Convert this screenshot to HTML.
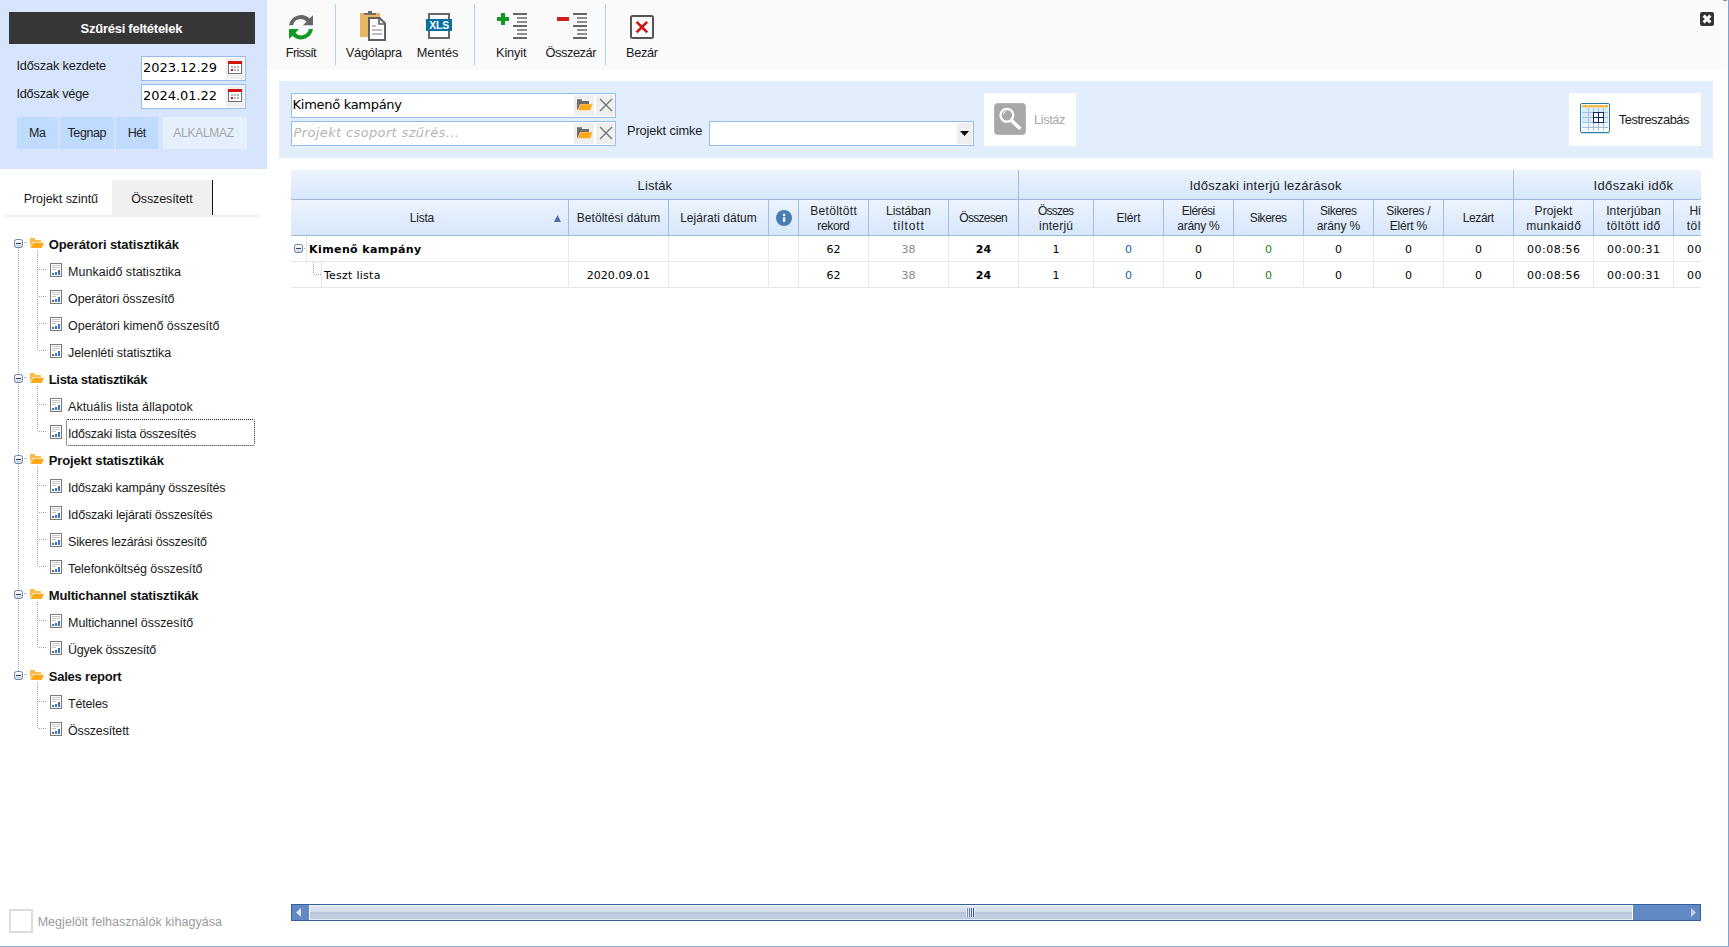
<!DOCTYPE html>
<html lang="hu">
<head>
<meta charset="utf-8">
<title>Időszaki lista összesítés</title>
<style>
*{box-sizing:border-box;margin:0;padding:0}
html,body{width:1729px;height:947px;overflow:hidden;background:#fff}
body{position:relative;font-family:"Liberation Sans",sans-serif;font-size:12.5px;color:#1a1a1a}
.t{position:absolute;white-space:nowrap}
.r{position:absolute}
svg{position:absolute;overflow:visible}
.hc{position:absolute;top:200px;height:35px;border-left:1px solid #a3bde0}
.dot-v{position:absolute;width:1px;background-image:linear-gradient(to bottom,#93a5c8 50%,transparent 50%);background-size:1px 2px}
.dot-h{position:absolute;height:1px;background-image:linear-gradient(to right,#93a5c8 50%,transparent 50%);background-size:2px 1px}
</style>
</head>
<body>
<div class="r" style="left:0px;top:0px;width:267px;height:169px;background:#d6e5fb;"></div>
<div class="r" style="left:9px;top:12px;width:246px;height:32px;background:#363636;"></div>
<div class="t" style="top:22px;font-size:13px;line-height:1;font-family:'Liberation Sans',sans-serif;color:#fff;font-weight:bold;letter-spacing:-0.256px;left:-68.63px;width:400px;text-align:center;">Szűrési feltételek</div>
<div class="t" style="top:60px;font-size:12.8px;line-height:1;font-family:'Liberation Sans',sans-serif;color:#1a1a1a;letter-spacing:-0.195px;left:16.42px;">Időszak kezdete</div>
<div class="t" style="top:88px;font-size:12.8px;line-height:1;font-family:'Liberation Sans',sans-serif;color:#1a1a1a;letter-spacing:-0.234px;left:16.42px;">Időszak vége</div>
<div class="r" style="left:141px;top:56px;width:105px;height:25px;background:#fff;border:1px solid #96bdec"></div>
<div class="r" style="left:226px;top:58px;width:18px;height:21px;background:#efefef;"></div>
<div class="t" style="top:61px;font-size:13px;line-height:1;font-family:'DejaVu Sans','Liberation Sans',sans-serif;color:#000;letter-spacing:-0.052px;left:143.01px;">2023.12.29</div>
<svg style="left:228px;top:61px" width="14" height="13" viewBox="0 0 14 13"><rect x=".5" y="2.5" width="13" height="10" fill="#fff" stroke="#6f6f6f"/><rect x="0" y="0" width="14" height="3" fill="#cf1212"/><path d="M3 5h2v2H3zM6 5h2v2H6zM9 5h2v2H9zM6 8h2v2H6zM9 8h2v2H9z" fill="#b4b4b4"/><rect x="3" y="8" width="2" height="2" fill="#d81111"/></svg>
<div class="r" style="left:141px;top:84px;width:105px;height:25px;background:#fff;border:1px solid #96bdec"></div>
<div class="r" style="left:226px;top:86px;width:18px;height:21px;background:#efefef;"></div>
<div class="t" style="top:89px;font-size:13px;line-height:1;font-family:'DejaVu Sans','Liberation Sans',sans-serif;color:#000;letter-spacing:-0.052px;left:143.01px;">2024.01.22</div>
<svg style="left:228px;top:89px" width="14" height="13" viewBox="0 0 14 13"><rect x=".5" y="2.5" width="13" height="10" fill="#fff" stroke="#6f6f6f"/><rect x="0" y="0" width="14" height="3" fill="#cf1212"/><path d="M3 5h2v2H3zM6 5h2v2H6zM9 5h2v2H9zM6 8h2v2H6zM9 8h2v2H9z" fill="#b4b4b4"/><rect x="3" y="8" width="2" height="2" fill="#d81111"/></svg>
<div class="r" style="left:17px;top:117px;width:41px;height:32px;background:#bfdbfe;"></div>
<div class="t" style="top:127px;font-size:12.5px;line-height:1;font-family:'Liberation Sans',sans-serif;color:#222;letter-spacing:-0.55px;left:-162.78px;width:400px;text-align:center;">Ma</div>
<div class="r" style="left:60px;top:117px;width:54px;height:32px;background:#bfdbfe;"></div>
<div class="t" style="top:127px;font-size:12.5px;line-height:1;font-family:'Liberation Sans',sans-serif;color:#222;letter-spacing:-0.398px;left:-113.20px;width:400px;text-align:center;">Tegnap</div>
<div class="r" style="left:116px;top:117px;width:42px;height:32px;background:#bfdbfe;"></div>
<div class="t" style="top:127px;font-size:12.5px;line-height:1;font-family:'Liberation Sans',sans-serif;color:#222;letter-spacing:-0.514px;left:-63.26px;width:400px;text-align:center;">Hét</div>
<div class="r" style="left:163px;top:117px;width:84px;height:32px;background:#e6f0fd;"></div>
<div class="t" style="top:127px;font-size:12px;line-height:1;font-family:'Liberation Sans',sans-serif;color:#a6a6a6;letter-spacing:-0.26px;left:3.57px;width:400px;text-align:center;">ALKALMAZ</div>
<div class="r" style="left:5px;top:215px;width:254px;height:2px;background:#eeeeee;"></div>
<div class="r" style="left:112px;top:180px;width:100px;height:35px;background:#f0f0f0;"></div>
<div class="r" style="left:212px;top:180px;width:1px;height:35px;background:#111;"></div>
<div class="t" style="top:193px;font-size:12.5px;line-height:1;font-family:'Liberation Sans',sans-serif;color:#1a1a1a;letter-spacing:-0.047px;left:23.64px;">Projekt szintű</div>
<div class="t" style="top:193px;font-size:12.5px;line-height:1;font-family:'Liberation Sans',sans-serif;color:#1a1a1a;letter-spacing:-0.111px;left:131.24px;">Összesített</div>
<div class="r" style="left:9px;top:909px;width:24px;height:24px;background:#fff;border:2px solid #dcdcdc"></div>
<div class="t" style="top:916px;font-size:12.5px;line-height:1;font-family:'Liberation Sans',sans-serif;color:#9a9a9a;letter-spacing:0.051px;left:37.64px;">Megjelölt felhasználók kihagyása</div>
<div class="dot-v" style="left:18px;top:248px;height:423px"></div>
<div class="dot-v" style="left:37px;top:251px;height:99px"></div>
<svg style="left:14px;top:239px" width="9" height="9" viewBox="0 0 9 9"><defs><linearGradient id="eg0" x1="0" y1="0" x2="0" y2="1"><stop offset="0" stop-color="#fff"/><stop offset="1" stop-color="#ccd3e2"/></linearGradient></defs><rect x=".5" y=".5" width="8" height="8" rx="2" fill="url(#eg0)" stroke="#727fa2"/><path d="M2 4.500h5" stroke="#39425f"/></svg>
<div class="dot-h" style="left:24px;top:242px;width:4px"></div>
<svg style="left:30px;top:238px" width="14" height="10" viewBox="0 0 14 10"><path d="M0 0h5v2h6v2.2H2.6L0 9.6z" fill="#fdbb4d"/><path d="M3.2 4.8H14L11.8 10H.6z" fill="#fda91a"/></svg>
<div class="t" style="top:238px;font-size:13px;line-height:1;font-family:'Liberation Sans',sans-serif;color:#111;font-weight:bold;letter-spacing:-0.088px;left:48.71px;">Operátori statisztikák</div>
<div class="dot-h" style="left:39px;top:269px;width:8px"></div>
<svg style="left:50px;top:263px" width="12" height="14" viewBox="0 0 12 14"><rect x=".5" y=".5" width="11" height="13" fill="#fff" stroke="#7a7a7a"/><path d="M2 2.5h8M2 4.5h8M2 6.5h4" stroke="#c6c6c6"/><path d="M2 10h2v2H2zM5 9h2v3H5zM8 7h2v5H8z" fill="#3973bd"/></svg>
<div class="t" style="top:266px;font-size:12.5px;line-height:1;font-family:'Liberation Sans',sans-serif;color:#1a1a1a;letter-spacing:0.019px;left:68.04px;">Munkaidő statisztika</div>
<div class="dot-h" style="left:39px;top:296px;width:8px"></div>
<svg style="left:50px;top:290px" width="12" height="14" viewBox="0 0 12 14"><rect x=".5" y=".5" width="11" height="13" fill="#fff" stroke="#7a7a7a"/><path d="M2 2.5h8M2 4.5h8M2 6.5h4" stroke="#c6c6c6"/><path d="M2 10h2v2H2zM5 9h2v3H5zM8 7h2v5H8z" fill="#3973bd"/></svg>
<div class="t" style="top:293px;font-size:12.5px;line-height:1;font-family:'Liberation Sans',sans-serif;color:#1a1a1a;letter-spacing:-0.109px;left:68.04px;">Operátori összesítő</div>
<div class="dot-h" style="left:39px;top:323px;width:8px"></div>
<svg style="left:50px;top:317px" width="12" height="14" viewBox="0 0 12 14"><rect x=".5" y=".5" width="11" height="13" fill="#fff" stroke="#7a7a7a"/><path d="M2 2.5h8M2 4.5h8M2 6.5h4" stroke="#c6c6c6"/><path d="M2 10h2v2H2zM5 9h2v3H5zM8 7h2v5H8z" fill="#3973bd"/></svg>
<div class="t" style="top:320px;font-size:12.5px;line-height:1;font-family:'Liberation Sans',sans-serif;color:#1a1a1a;letter-spacing:-0.033px;left:68.04px;">Operátori kimenő összesítő</div>
<div class="dot-h" style="left:39px;top:350px;width:8px"></div>
<svg style="left:50px;top:344px" width="12" height="14" viewBox="0 0 12 14"><rect x=".5" y=".5" width="11" height="13" fill="#fff" stroke="#7a7a7a"/><path d="M2 2.5h8M2 4.5h8M2 6.5h4" stroke="#c6c6c6"/><path d="M2 10h2v2H2zM5 9h2v3H5zM8 7h2v5H8z" fill="#3973bd"/></svg>
<div class="t" style="top:347px;font-size:12.5px;line-height:1;font-family:'Liberation Sans',sans-serif;color:#1a1a1a;letter-spacing:-0.055px;left:68.04px;">Jelenléti statisztika</div>
<div class="dot-v" style="left:37px;top:386px;height:45px"></div>
<svg style="left:14px;top:374px" width="9" height="9" viewBox="0 0 9 9"><defs><linearGradient id="eg1" x1="0" y1="0" x2="0" y2="1"><stop offset="0" stop-color="#fff"/><stop offset="1" stop-color="#ccd3e2"/></linearGradient></defs><rect x=".5" y=".5" width="8" height="8" rx="2" fill="url(#eg1)" stroke="#727fa2"/><path d="M2 4.500h5" stroke="#39425f"/></svg>
<div class="dot-h" style="left:24px;top:377px;width:4px"></div>
<svg style="left:30px;top:373px" width="14" height="10" viewBox="0 0 14 10"><path d="M0 0h5v2h6v2.2H2.6L0 9.6z" fill="#fdbb4d"/><path d="M3.2 4.8H14L11.8 10H.6z" fill="#fda91a"/></svg>
<div class="t" style="top:373px;font-size:13px;line-height:1;font-family:'Liberation Sans',sans-serif;color:#111;font-weight:bold;letter-spacing:-0.31px;left:48.71px;">Lista statisztikák</div>
<div class="dot-h" style="left:39px;top:404px;width:8px"></div>
<svg style="left:50px;top:398px" width="12" height="14" viewBox="0 0 12 14"><rect x=".5" y=".5" width="11" height="13" fill="#fff" stroke="#7a7a7a"/><path d="M2 2.5h8M2 4.5h8M2 6.5h4" stroke="#c6c6c6"/><path d="M2 10h2v2H2zM5 9h2v3H5zM8 7h2v5H8z" fill="#3973bd"/></svg>
<div class="t" style="top:401px;font-size:12.5px;line-height:1;font-family:'Liberation Sans',sans-serif;color:#1a1a1a;letter-spacing:0.076px;left:68.04px;">Aktuális lista állapotok</div>
<div class="dot-h" style="left:39px;top:431px;width:8px"></div>
<svg style="left:50px;top:425px" width="12" height="14" viewBox="0 0 12 14"><rect x=".5" y=".5" width="11" height="13" fill="#fff" stroke="#7a7a7a"/><path d="M2 2.5h8M2 4.5h8M2 6.5h4" stroke="#c6c6c6"/><path d="M2 10h2v2H2zM5 9h2v3H5zM8 7h2v5H8z" fill="#3973bd"/></svg>
<div class="t" style="top:428px;font-size:12.5px;line-height:1;font-family:'Liberation Sans',sans-serif;color:#1a1a1a;letter-spacing:-0.245px;left:68.04px;">Időszaki lista összesítés</div>
<div class="dot-v" style="left:37px;top:467px;height:99px"></div>
<svg style="left:14px;top:455px" width="9" height="9" viewBox="0 0 9 9"><defs><linearGradient id="eg2" x1="0" y1="0" x2="0" y2="1"><stop offset="0" stop-color="#fff"/><stop offset="1" stop-color="#ccd3e2"/></linearGradient></defs><rect x=".5" y=".5" width="8" height="8" rx="2" fill="url(#eg2)" stroke="#727fa2"/><path d="M2 4.500h5" stroke="#39425f"/></svg>
<div class="dot-h" style="left:24px;top:458px;width:4px"></div>
<svg style="left:30px;top:454px" width="14" height="10" viewBox="0 0 14 10"><path d="M0 0h5v2h6v2.2H2.6L0 9.6z" fill="#fdbb4d"/><path d="M3.2 4.8H14L11.8 10H.6z" fill="#fda91a"/></svg>
<div class="t" style="top:454px;font-size:13px;line-height:1;font-family:'Liberation Sans',sans-serif;color:#111;font-weight:bold;letter-spacing:-0.137px;left:48.71px;">Projekt statisztikák</div>
<div class="dot-h" style="left:39px;top:485px;width:8px"></div>
<svg style="left:50px;top:479px" width="12" height="14" viewBox="0 0 12 14"><rect x=".5" y=".5" width="11" height="13" fill="#fff" stroke="#7a7a7a"/><path d="M2 2.5h8M2 4.5h8M2 6.5h4" stroke="#c6c6c6"/><path d="M2 10h2v2H2zM5 9h2v3H5zM8 7h2v5H8z" fill="#3973bd"/></svg>
<div class="t" style="top:482px;font-size:12.5px;line-height:1;font-family:'Liberation Sans',sans-serif;color:#1a1a1a;letter-spacing:-0.194px;left:68.04px;">Időszaki kampány összesítés</div>
<div class="dot-h" style="left:39px;top:512px;width:8px"></div>
<svg style="left:50px;top:506px" width="12" height="14" viewBox="0 0 12 14"><rect x=".5" y=".5" width="11" height="13" fill="#fff" stroke="#7a7a7a"/><path d="M2 2.5h8M2 4.5h8M2 6.5h4" stroke="#c6c6c6"/><path d="M2 10h2v2H2zM5 9h2v3H5zM8 7h2v5H8z" fill="#3973bd"/></svg>
<div class="t" style="top:509px;font-size:12.5px;line-height:1;font-family:'Liberation Sans',sans-serif;color:#1a1a1a;letter-spacing:-0.158px;left:68.04px;">Időszaki lejárati összesítés</div>
<div class="dot-h" style="left:39px;top:539px;width:8px"></div>
<svg style="left:50px;top:533px" width="12" height="14" viewBox="0 0 12 14"><rect x=".5" y=".5" width="11" height="13" fill="#fff" stroke="#7a7a7a"/><path d="M2 2.5h8M2 4.5h8M2 6.5h4" stroke="#c6c6c6"/><path d="M2 10h2v2H2zM5 9h2v3H5zM8 7h2v5H8z" fill="#3973bd"/></svg>
<div class="t" style="top:536px;font-size:12.5px;line-height:1;font-family:'Liberation Sans',sans-serif;color:#1a1a1a;letter-spacing:-0.228px;left:68.04px;">Sikeres lezárási összesítő</div>
<div class="dot-h" style="left:39px;top:566px;width:8px"></div>
<svg style="left:50px;top:560px" width="12" height="14" viewBox="0 0 12 14"><rect x=".5" y=".5" width="11" height="13" fill="#fff" stroke="#7a7a7a"/><path d="M2 2.5h8M2 4.5h8M2 6.5h4" stroke="#c6c6c6"/><path d="M2 10h2v2H2zM5 9h2v3H5zM8 7h2v5H8z" fill="#3973bd"/></svg>
<div class="t" style="top:563px;font-size:12.5px;line-height:1;font-family:'Liberation Sans',sans-serif;color:#1a1a1a;letter-spacing:-0.073px;left:68.04px;">Telefonköltség összesítő</div>
<div class="dot-v" style="left:37px;top:602px;height:45px"></div>
<svg style="left:14px;top:590px" width="9" height="9" viewBox="0 0 9 9"><defs><linearGradient id="eg3" x1="0" y1="0" x2="0" y2="1"><stop offset="0" stop-color="#fff"/><stop offset="1" stop-color="#ccd3e2"/></linearGradient></defs><rect x=".5" y=".5" width="8" height="8" rx="2" fill="url(#eg3)" stroke="#727fa2"/><path d="M2 4.500h5" stroke="#39425f"/></svg>
<div class="dot-h" style="left:24px;top:593px;width:4px"></div>
<svg style="left:30px;top:589px" width="14" height="10" viewBox="0 0 14 10"><path d="M0 0h5v2h6v2.2H2.6L0 9.6z" fill="#fdbb4d"/><path d="M3.2 4.8H14L11.8 10H.6z" fill="#fda91a"/></svg>
<div class="t" style="top:589px;font-size:13px;line-height:1;font-family:'Liberation Sans',sans-serif;color:#111;font-weight:bold;letter-spacing:-0.137px;left:48.71px;">Multichannel statisztikák</div>
<div class="dot-h" style="left:39px;top:620px;width:8px"></div>
<svg style="left:50px;top:614px" width="12" height="14" viewBox="0 0 12 14"><rect x=".5" y=".5" width="11" height="13" fill="#fff" stroke="#7a7a7a"/><path d="M2 2.5h8M2 4.5h8M2 6.5h4" stroke="#c6c6c6"/><path d="M2 10h2v2H2zM5 9h2v3H5zM8 7h2v5H8z" fill="#3973bd"/></svg>
<div class="t" style="top:617px;font-size:12.5px;line-height:1;font-family:'Liberation Sans',sans-serif;color:#1a1a1a;letter-spacing:-0.063px;left:68.04px;">Multichannel összesítő</div>
<div class="dot-h" style="left:39px;top:647px;width:8px"></div>
<svg style="left:50px;top:641px" width="12" height="14" viewBox="0 0 12 14"><rect x=".5" y=".5" width="11" height="13" fill="#fff" stroke="#7a7a7a"/><path d="M2 2.5h8M2 4.5h8M2 6.5h4" stroke="#c6c6c6"/><path d="M2 10h2v2H2zM5 9h2v3H5zM8 7h2v5H8z" fill="#3973bd"/></svg>
<div class="t" style="top:644px;font-size:12.5px;line-height:1;font-family:'Liberation Sans',sans-serif;color:#1a1a1a;letter-spacing:-0.257px;left:68.04px;">Ügyek összesítő</div>
<div class="dot-v" style="left:37px;top:683px;height:45px"></div>
<svg style="left:14px;top:671px" width="9" height="9" viewBox="0 0 9 9"><defs><linearGradient id="eg4" x1="0" y1="0" x2="0" y2="1"><stop offset="0" stop-color="#fff"/><stop offset="1" stop-color="#ccd3e2"/></linearGradient></defs><rect x=".5" y=".5" width="8" height="8" rx="2" fill="url(#eg4)" stroke="#727fa2"/><path d="M2 4.500h5" stroke="#39425f"/></svg>
<div class="dot-h" style="left:24px;top:674px;width:4px"></div>
<svg style="left:30px;top:670px" width="14" height="10" viewBox="0 0 14 10"><path d="M0 0h5v2h6v2.2H2.6L0 9.6z" fill="#fdbb4d"/><path d="M3.2 4.8H14L11.8 10H.6z" fill="#fda91a"/></svg>
<div class="t" style="top:670px;font-size:13px;line-height:1;font-family:'Liberation Sans',sans-serif;color:#111;font-weight:bold;letter-spacing:-0.208px;left:48.71px;">Sales report</div>
<div class="dot-h" style="left:39px;top:701px;width:8px"></div>
<svg style="left:50px;top:695px" width="12" height="14" viewBox="0 0 12 14"><rect x=".5" y=".5" width="11" height="13" fill="#fff" stroke="#7a7a7a"/><path d="M2 2.5h8M2 4.5h8M2 6.5h4" stroke="#c6c6c6"/><path d="M2 10h2v2H2zM5 9h2v3H5zM8 7h2v5H8z" fill="#3973bd"/></svg>
<div class="t" style="top:698px;font-size:12.5px;line-height:1;font-family:'Liberation Sans',sans-serif;color:#1a1a1a;letter-spacing:-0.179px;left:68.04px;">Tételes</div>
<div class="dot-h" style="left:39px;top:728px;width:8px"></div>
<svg style="left:50px;top:722px" width="12" height="14" viewBox="0 0 12 14"><rect x=".5" y=".5" width="11" height="13" fill="#fff" stroke="#7a7a7a"/><path d="M2 2.5h8M2 4.5h8M2 6.5h4" stroke="#c6c6c6"/><path d="M2 10h2v2H2zM5 9h2v3H5zM8 7h2v5H8z" fill="#3973bd"/></svg>
<div class="t" style="top:725px;font-size:12.5px;line-height:1;font-family:'Liberation Sans',sans-serif;color:#1a1a1a;letter-spacing:-0.161px;left:68.04px;">Összesített</div>
<div class="r" style="left:66px;top:419px;width:189px;height:27px;border:1px dotted #222;border-radius:2px"></div>
<div class="r" style="left:267px;top:0px;width:1460px;height:69px;background:#fafafa;"></div>
<div class="r" style="left:335px;top:4px;width:1px;height:61px;background:#b9cfee;"></div>
<div class="r" style="left:474px;top:4px;width:1px;height:61px;background:#b9cfee;"></div>
<div class="r" style="left:605px;top:4px;width:1px;height:61px;background:#b9cfee;"></div>
<svg style="left:289px;top:15px" width="24" height="24" viewBox="0 0 24 24"><path d="M0 10.3A12.2 12.2 0 0 1 20.6 3.6L24 .3v10H14l3.6-3.6A7.8 7.8 0 0 0 4.1 10.3z" fill="#666"/><path d="M0 10.3A12.2 12.2 0 0 1 20.6 3.6L24 .3v10H14l3.6-3.6A7.8 7.8 0 0 0 4.1 10.3z" fill="#0f9a1f" transform="rotate(180 12 12.2)"/></svg>
<div class="t" style="top:47px;font-size:12.8px;line-height:1;font-family:'Liberation Sans',sans-serif;color:#1a1a1a;letter-spacing:-0.665px;left:100.87px;width:400px;text-align:center;">Frissít</div>
<svg style="left:360px;top:11px" width="26" height="30" viewBox="0 0 26 30"><rect x="0" y="2" width="20" height="24" fill="#e9b762"/><rect x="8" y="0" width="4" height="2.2" fill="#666"/><rect x="4" y="2" width="12" height="1.8" fill="#666"/><path d="M9 7h10.6L25 12.4V29H9z" fill="#fff" stroke="#5f5f5f" stroke-width="2"/><path d="M19 7v6h6" fill="none" stroke="#5f5f5f" stroke-width="1.6"/><path d="M12 15h3.8M12 19h10M12 23h10" stroke="#a9a9a9" stroke-width="1.6"/></svg>
<div class="t" style="top:47px;font-size:12.8px;line-height:1;font-family:'Liberation Sans',sans-serif;color:#1a1a1a;letter-spacing:-0.249px;left:173.88px;width:400px;text-align:center;">Vágólapra</div>
<svg style="left:426px;top:13px" width="26" height="26" viewBox="0 0 26 26"><rect x="3" y="1" width="20" height="24" fill="#fff" stroke="#676767" stroke-width="2"/><rect x="0" y="6" width="26" height="12" fill="#06709f"/><text x="13.1" y="15.9" text-anchor="middle" font-family="Liberation Sans, sans-serif" font-weight="bold" font-size="10.4" letter-spacing="-.2" fill="#fff">XLS</text></svg>
<div class="t" style="top:47px;font-size:12.8px;line-height:1;font-family:'Liberation Sans',sans-serif;color:#1a1a1a;letter-spacing:-0.023px;left:237.59px;width:400px;text-align:center;">Mentés</div>
<svg style="left:497px;top:13px" width="30" height="26" viewBox="0 0 30 26"><path d="M4 0h4v4h4v4H8v4H4V8H0V4h4z" fill="#0f9a1f"/><rect x="16" y="0" width="14" height="2" fill="#666"/><rect x="20" y="4" width="10" height="2" fill="#8e8e8e"/><rect x="20" y="8" width="10" height="2" fill="#8e8e8e"/><rect x="16" y="12" width="14" height="2" fill="#666"/><rect x="20" y="16" width="10" height="2" fill="#8e8e8e"/><rect x="20" y="20" width="10" height="2" fill="#8e8e8e"/><rect x="16" y="24" width="14" height="2" fill="#666"/></svg>
<div class="t" style="top:47px;font-size:12.8px;line-height:1;font-family:'Liberation Sans',sans-serif;color:#1a1a1a;letter-spacing:-0.149px;left:311.23px;width:400px;text-align:center;">Kinyit</div>
<svg style="left:557px;top:13px" width="30" height="26" viewBox="0 0 30 26"><rect x="0" y="4" width="12" height="4" fill="#d01b1b"/><rect x="16" y="0" width="14" height="2" fill="#666"/><rect x="20" y="4" width="10" height="2" fill="#8e8e8e"/><rect x="20" y="8" width="10" height="2" fill="#8e8e8e"/><rect x="16" y="12" width="14" height="2" fill="#666"/><rect x="20" y="16" width="10" height="2" fill="#8e8e8e"/><rect x="20" y="20" width="10" height="2" fill="#8e8e8e"/><rect x="16" y="24" width="14" height="2" fill="#666"/></svg>
<div class="t" style="top:47px;font-size:12.8px;line-height:1;font-family:'Liberation Sans',sans-serif;color:#1a1a1a;letter-spacing:-0.414px;left:370.79px;width:400px;text-align:center;">Összezár</div>
<svg style="left:630px;top:15px" width="24" height="24" viewBox="0 0 24 24"><rect x="1" y="1" width="22" height="22" rx="1.5" fill="#fbfbfb" stroke="#555" stroke-width="2"/><path d="M6.6 6.8L17.2 17.4M17.2 6.8L6.6 17.4" stroke="#d11414" stroke-width="2.6"/></svg>
<div class="t" style="top:47px;font-size:12.8px;line-height:1;font-family:'Liberation Sans',sans-serif;color:#1a1a1a;letter-spacing:-0.346px;left:441.83px;width:400px;text-align:center;">Bezár</div>
<svg style="left:1699px;top:11px" width="16" height="16" viewBox="-1 -1 16 16"><rect x="-1" y="-1" width="16" height="16" rx="3" fill="#fff"/><rect x="0" y="0" width="14" height="14" rx="2" fill="#333"/><path d="M3.600 3.600L10.400 10.400M10.400 3.600L3.600 10.400" stroke="#fff" stroke-width="2.900"/></svg>
<div class="r" style="left:279px;top:81px;width:1434px;height:77px;background:#e3eefd;"></div>
<div class="r" style="left:291px;top:93px;width:325px;height:25px;background:#fff;border:1px solid #93bbec"></div>
<div class="r" style="left:574px;top:95px;width:20px;height:21px;background:#efefef;"></div>
<div class="r" style="left:596px;top:95px;width:18px;height:21px;background:#efefef;"></div>
<svg style="left:577px;top:99px" width="16" height="12" viewBox="0 0 16 12"><path d="M0 .3h5v1.8h7v3H3L.9 10.4H0z" fill="#6c6c6c"/><path d="M3.3 5.3H15.4L13.2 11.3H1.2z" fill="#fcaa1a"/></svg>
<svg style="left:600px;top:99.1px" width="12" height="12" viewBox="0 0 12 12"><path d="M0 0l12 12M12 0L0 12" stroke="#707070" stroke-width="1.25"/></svg>
<div class="r" style="left:291px;top:121px;width:325px;height:25px;background:#fff;border:1px solid #93bbec"></div>
<div class="r" style="left:574px;top:123px;width:20px;height:21px;background:#efefef;"></div>
<div class="r" style="left:596px;top:123px;width:18px;height:21px;background:#efefef;"></div>
<svg style="left:577px;top:127px" width="16" height="12" viewBox="0 0 16 12"><path d="M0 .3h5v1.8h7v3H3L.9 10.4H0z" fill="#6c6c6c"/><path d="M3.3 5.3H15.4L13.2 11.3H1.2z" fill="#fcaa1a"/></svg>
<svg style="left:600px;top:127.1px" width="12" height="12" viewBox="0 0 12 12"><path d="M0 0l12 12M12 0L0 12" stroke="#707070" stroke-width="1.25"/></svg>
<div class="t" style="top:98px;font-size:13px;line-height:1;font-family:'DejaVu Sans','Liberation Sans',sans-serif;color:#000;letter-spacing:-0.296px;left:292.62px;">Kimenő kampány</div>
<div class="t" style="top:126px;font-size:13px;line-height:1;font-family:'DejaVu Sans','Liberation Sans',sans-serif;color:#b4b4b4;font-style:italic;letter-spacing:0.361px;left:293.62px;">Projekt csoport szűrés...</div>
<div class="t" style="top:125px;font-size:12.8px;line-height:1;font-family:'Liberation Sans',sans-serif;color:#1a1a1a;letter-spacing:-0.113px;left:627.02px;">Projekt cimke</div>
<div class="r" style="left:709px;top:121px;width:265px;height:25px;background:#fff;border:1px solid #93bbec"></div>
<div class="r" style="left:957px;top:123px;width:15px;height:21px;background:#efefef;"></div>
<svg style="left:960px;top:131px" width="9" height="5" viewBox="0 0 9 5"><path d="M0 0h9L4.5 5z" fill="#000"/></svg>
<div class="r" style="left:984px;top:93px;width:92px;height:53px;background:#fff;"></div>
<svg style="left:994px;top:103px" width="32" height="32" viewBox="0 0 32 32"><rect x=".5" y=".5" width="31" height="31" rx="3" fill="#a8a8a8" stroke="#b4b4b4"/><circle cx="12.9" cy="12.3" r="6.400" fill="none" stroke="#fff" stroke-width="2.300"/><path d="M9.100 11.700a4 4 0 0 1 3.200-3.400" fill="none" stroke="#fff" stroke-width=".900"/><path d="M18.300 18.400l7 6.400" stroke="#fff" stroke-width="3.500" stroke-linecap="round"/></svg>
<div class="t" style="top:114px;font-size:12.8px;line-height:1;font-family:'Liberation Sans',sans-serif;color:#a8a8a8;letter-spacing:-0.397px;left:1034.02px;">Listáz</div>
<div class="r" style="left:1569px;top:93px;width:132px;height:53px;background:#fff;"></div>
<svg style="left:1580px;top:103px" width="30" height="30" viewBox="0 0 30 30"><rect x=".5" y=".5" width="29" height="29" rx="1.5" fill="#fff" stroke="#1f7ab7"/><rect x="2" y="4.5" width="26" height="15" fill="#d9ecfb"/><rect x="2" y="19.5" width="26" height="5" fill="#eef7fd"/><path d="M8.5 2v26" stroke="#a5bfdb"/><path d="M13.5 2v26" stroke="#a5bfdb"/><path d="M18.5 2v26" stroke="#a5bfdb"/><path d="M23.5 2v26" stroke="#a5bfdb"/><path d="M2 9.5h26" stroke="#a5bfdb"/><path d="M2 14.5h26" stroke="#a5bfdb"/><path d="M2 19.5h26" stroke="#a5bfdb"/><path d="M2 24.5h26" stroke="#a5bfdb"/><rect x="2" y="2" width="26" height="2.4" fill="#f7b733"/><path d="M8.5 2v2.4M13.5 2v2.4M18.5 2v2.4M23.5 2v2.4" stroke="#fbe0a0"/><rect x="13.5" y="9.5" width="10" height="10" fill="#fff" stroke="#17265c"/><path d="M18.5 9.5v10M13.5 14.5h10" stroke="#17265c"/><path d="M1 30.3h28" stroke="#8aa" stroke-opacity=".5"/></svg>
<div class="t" style="top:114px;font-size:12.8px;line-height:1;font-family:'Liberation Sans',sans-serif;color:#1a1a1a;letter-spacing:-0.432px;left:1618.82px;">Testreszabás</div>
<div class="r" id="grid" style="left:291px;top:170px;width:1410px;height:130px;overflow:hidden">
<div class="r" style="left:-291px;top:-170px;width:1729px;height:947px">
<div class="r" style="left:291px;top:170px;width:1462px;height:29px;background:linear-gradient(to bottom,#eef4fe 0%,#e3eefd 45%,#d7e7fb 100%);"></div>
<div class="r" style="left:291px;top:199px;width:1462px;height:1px;background:#9fb8dc;"></div>
<div class="r" style="left:291px;top:200px;width:1462px;height:35px;background:linear-gradient(to bottom,#eef4fe 0%,#e3eefd 45%,#d7e7fb 100%);"></div>
<div class="r" style="left:291px;top:235px;width:1462px;height:1px;background:#9fb8dc;"></div>
<div class="r" style="left:1018px;top:170px;width:1px;height:29px;background:#a3bde0;"></div>
<div class="r" style="left:1513px;top:170px;width:1px;height:29px;background:#a3bde0;"></div>
<div class="t" style="top:179px;font-size:13px;line-height:1;font-family:'Liberation Sans',sans-serif;color:#222;letter-spacing:0.1px;left:454.85px;width:400px;text-align:center;">Listák</div>
<div class="t" style="top:179px;font-size:13px;line-height:1;font-family:'Liberation Sans',sans-serif;color:#222;letter-spacing:0.248px;left:1065.62px;width:400px;text-align:center;">Időszaki interjú lezárások</div>
<div class="t" style="top:179px;font-size:13px;line-height:1;font-family:'Liberation Sans',sans-serif;color:#222;letter-spacing:0.376px;left:1433.49px;width:400px;text-align:center;">Időszaki idők</div>
<div class="r" style="left:291px;top:261px;width:1462px;height:1px;background:#e6e6e6;"></div>
<div class="r" style="left:291px;top:287px;width:1462px;height:1px;background:#e6e6e6;"></div>
<div class="t" style="top:212px;font-size:12px;line-height:1;font-family:'Liberation Sans',sans-serif;color:#222;letter-spacing:-0.22px;left:221.89px;width:400px;text-align:center;">Lista</div>
<div class="r" style="left:568px;top:200px;width:1px;height:35px;background:#a3bde0;"></div>
<div class="r" style="left:568px;top:236px;width:1px;height:51px;background:#e9e9e9;"></div>
<div class="t" style="top:212px;font-size:12px;line-height:1;font-family:'Liberation Sans',sans-serif;color:#222;letter-spacing:0.054px;left:418.53px;width:400px;text-align:center;">Betöltési dátum</div>
<div class="r" style="left:668px;top:200px;width:1px;height:35px;background:#a3bde0;"></div>
<div class="r" style="left:668px;top:236px;width:1px;height:51px;background:#e9e9e9;"></div>
<div class="t" style="top:212px;font-size:12px;line-height:1;font-family:'Liberation Sans',sans-serif;color:#222;letter-spacing:0.049px;left:518.52px;width:400px;text-align:center;">Lejárati dátum</div>
<div class="r" style="left:768px;top:200px;width:1px;height:35px;background:#a3bde0;"></div>
<div class="r" style="left:768px;top:236px;width:1px;height:51px;background:#e9e9e9;"></div>
<div class="r" style="left:798px;top:200px;width:1px;height:35px;background:#a3bde0;"></div>
<div class="r" style="left:798px;top:236px;width:1px;height:51px;background:#e9e9e9;"></div>
<div class="t" style="top:205px;font-size:12px;line-height:1;font-family:'Liberation Sans',sans-serif;color:#222;letter-spacing:0.306px;left:633.65px;width:400px;text-align:center;">Betöltött</div>
<div class="t" style="top:220px;font-size:12px;line-height:1;font-family:'Liberation Sans',sans-serif;color:#222;letter-spacing:-0.347px;left:633.33px;width:400px;text-align:center;">rekord</div>
<div class="t" style="top:244px;font-size:11px;line-height:1;font-family:'DejaVu Sans','Liberation Sans',sans-serif;color:#000;letter-spacing:0.09px;left:633.54px;width:400px;text-align:center;">62</div>
<div class="t" style="top:270px;font-size:11px;line-height:1;font-family:'DejaVu Sans','Liberation Sans',sans-serif;color:#000;letter-spacing:0.09px;left:633.54px;width:400px;text-align:center;">62</div>
<div class="r" style="left:868px;top:200px;width:1px;height:35px;background:#a3bde0;"></div>
<div class="r" style="left:868px;top:236px;width:1px;height:51px;background:#e9e9e9;"></div>
<div class="t" style="top:205px;font-size:12px;line-height:1;font-family:'Liberation Sans',sans-serif;color:#222;letter-spacing:-0.085px;left:708.46px;width:400px;text-align:center;">Listában</div>
<div class="t" style="top:220px;font-size:12px;line-height:1;font-family:'Liberation Sans',sans-serif;color:#222;letter-spacing:0.856px;left:708.93px;width:400px;text-align:center;">tiltott</div>
<div class="t" style="top:244px;font-size:11px;line-height:1;font-family:'DejaVu Sans','Liberation Sans',sans-serif;color:#8a8a8a;letter-spacing:0.09px;left:708.54px;width:400px;text-align:center;">38</div>
<div class="t" style="top:270px;font-size:11px;line-height:1;font-family:'DejaVu Sans','Liberation Sans',sans-serif;color:#8a8a8a;letter-spacing:0.09px;left:708.54px;width:400px;text-align:center;">38</div>
<div class="r" style="left:948px;top:200px;width:1px;height:35px;background:#a3bde0;"></div>
<div class="r" style="left:948px;top:236px;width:1px;height:51px;background:#e9e9e9;"></div>
<div class="t" style="top:212px;font-size:12px;line-height:1;font-family:'Liberation Sans',sans-serif;color:#222;letter-spacing:-0.726px;left:783.14px;width:400px;text-align:center;">Összesen</div>
<div class="t" style="top:244px;font-size:11px;line-height:1;font-family:'DejaVu Sans','Liberation Sans',sans-serif;color:#000;font-weight:bold;letter-spacing:0.277px;left:783.64px;width:400px;text-align:center;">24</div>
<div class="t" style="top:270px;font-size:11px;line-height:1;font-family:'DejaVu Sans','Liberation Sans',sans-serif;color:#000;font-weight:bold;letter-spacing:0.277px;left:783.64px;width:400px;text-align:center;">24</div>
<div class="r" style="left:1018px;top:200px;width:1px;height:35px;background:#a3bde0;"></div>
<div class="r" style="left:1018px;top:236px;width:1px;height:51px;background:#e9e9e9;"></div>
<div class="t" style="top:205px;font-size:12px;line-height:1;font-family:'Liberation Sans',sans-serif;color:#222;letter-spacing:-0.787px;left:855.61px;width:400px;text-align:center;">Összes</div>
<div class="t" style="top:220px;font-size:12px;line-height:1;font-family:'Liberation Sans',sans-serif;color:#222;letter-spacing:0.199px;left:856.10px;width:400px;text-align:center;">interjú</div>
<div class="t" style="top:244px;font-size:11px;line-height:1;font-family:'DejaVu Sans','Liberation Sans',sans-serif;color:#000;left:856.00px;width:400px;text-align:center;">1</div>
<div class="t" style="top:270px;font-size:11px;line-height:1;font-family:'DejaVu Sans','Liberation Sans',sans-serif;color:#000;left:856.00px;width:400px;text-align:center;">1</div>
<div class="r" style="left:1093px;top:200px;width:1px;height:35px;background:#a3bde0;"></div>
<div class="r" style="left:1093px;top:236px;width:1px;height:51px;background:#e9e9e9;"></div>
<div class="t" style="top:212px;font-size:12px;line-height:1;font-family:'Liberation Sans',sans-serif;color:#222;letter-spacing:-0.127px;left:928.44px;width:400px;text-align:center;">Elért</div>
<div class="t" style="top:244px;font-size:11px;line-height:1;font-family:'DejaVu Sans','Liberation Sans',sans-serif;color:#1c5ca6;left:928.50px;width:400px;text-align:center;">0</div>
<div class="t" style="top:270px;font-size:11px;line-height:1;font-family:'DejaVu Sans','Liberation Sans',sans-serif;color:#1c5ca6;left:928.50px;width:400px;text-align:center;">0</div>
<div class="r" style="left:1163px;top:200px;width:1px;height:35px;background:#a3bde0;"></div>
<div class="r" style="left:1163px;top:236px;width:1px;height:51px;background:#e9e9e9;"></div>
<div class="t" style="top:205px;font-size:12px;line-height:1;font-family:'Liberation Sans',sans-serif;color:#222;letter-spacing:-0.568px;left:998.22px;width:400px;text-align:center;">Elérési</div>
<div class="t" style="top:220px;font-size:12px;line-height:1;font-family:'Liberation Sans',sans-serif;color:#222;letter-spacing:-0.242px;left:998.38px;width:400px;text-align:center;">arány %</div>
<div class="t" style="top:244px;font-size:11px;line-height:1;font-family:'DejaVu Sans','Liberation Sans',sans-serif;color:#000;left:998.50px;width:400px;text-align:center;">0</div>
<div class="t" style="top:270px;font-size:11px;line-height:1;font-family:'DejaVu Sans','Liberation Sans',sans-serif;color:#000;left:998.50px;width:400px;text-align:center;">0</div>
<div class="r" style="left:1233px;top:200px;width:1px;height:35px;background:#a3bde0;"></div>
<div class="r" style="left:1233px;top:236px;width:1px;height:51px;background:#e9e9e9;"></div>
<div class="t" style="top:212px;font-size:12px;line-height:1;font-family:'Liberation Sans',sans-serif;color:#222;letter-spacing:-0.456px;left:1068.27px;width:400px;text-align:center;">Sikeres</div>
<div class="t" style="top:244px;font-size:11px;line-height:1;font-family:'DejaVu Sans','Liberation Sans',sans-serif;color:#2c7a1c;left:1068.50px;width:400px;text-align:center;">0</div>
<div class="t" style="top:270px;font-size:11px;line-height:1;font-family:'DejaVu Sans','Liberation Sans',sans-serif;color:#2c7a1c;left:1068.50px;width:400px;text-align:center;">0</div>
<div class="r" style="left:1303px;top:200px;width:1px;height:35px;background:#a3bde0;"></div>
<div class="r" style="left:1303px;top:236px;width:1px;height:51px;background:#e9e9e9;"></div>
<div class="t" style="top:205px;font-size:12px;line-height:1;font-family:'Liberation Sans',sans-serif;color:#222;letter-spacing:-0.506px;left:1138.25px;width:400px;text-align:center;">Sikeres</div>
<div class="t" style="top:220px;font-size:12px;line-height:1;font-family:'Liberation Sans',sans-serif;color:#222;letter-spacing:-0.092px;left:1138.45px;width:400px;text-align:center;">arány %</div>
<div class="t" style="top:244px;font-size:11px;line-height:1;font-family:'DejaVu Sans','Liberation Sans',sans-serif;color:#000;left:1138.50px;width:400px;text-align:center;">0</div>
<div class="t" style="top:270px;font-size:11px;line-height:1;font-family:'DejaVu Sans','Liberation Sans',sans-serif;color:#000;left:1138.50px;width:400px;text-align:center;">0</div>
<div class="r" style="left:1373px;top:200px;width:1px;height:35px;background:#a3bde0;"></div>
<div class="r" style="left:1373px;top:236px;width:1px;height:51px;background:#e9e9e9;"></div>
<div class="t" style="top:205px;font-size:12px;line-height:1;font-family:'Liberation Sans',sans-serif;color:#222;letter-spacing:-0.288px;left:1208.36px;width:400px;text-align:center;">Sikeres /</div>
<div class="t" style="top:220px;font-size:12px;line-height:1;font-family:'Liberation Sans',sans-serif;color:#222;letter-spacing:-0.235px;left:1208.38px;width:400px;text-align:center;">Elért %</div>
<div class="t" style="top:244px;font-size:11px;line-height:1;font-family:'DejaVu Sans','Liberation Sans',sans-serif;color:#000;left:1208.50px;width:400px;text-align:center;">0</div>
<div class="t" style="top:270px;font-size:11px;line-height:1;font-family:'DejaVu Sans','Liberation Sans',sans-serif;color:#000;left:1208.50px;width:400px;text-align:center;">0</div>
<div class="r" style="left:1443px;top:200px;width:1px;height:35px;background:#a3bde0;"></div>
<div class="r" style="left:1443px;top:236px;width:1px;height:51px;background:#e9e9e9;"></div>
<div class="t" style="top:212px;font-size:12px;line-height:1;font-family:'Liberation Sans',sans-serif;color:#222;letter-spacing:-0.396px;left:1278.30px;width:400px;text-align:center;">Lezárt</div>
<div class="t" style="top:244px;font-size:11px;line-height:1;font-family:'DejaVu Sans','Liberation Sans',sans-serif;color:#000;left:1278.50px;width:400px;text-align:center;">0</div>
<div class="t" style="top:270px;font-size:11px;line-height:1;font-family:'DejaVu Sans','Liberation Sans',sans-serif;color:#000;left:1278.50px;width:400px;text-align:center;">0</div>
<div class="r" style="left:1513px;top:200px;width:1px;height:35px;background:#a3bde0;"></div>
<div class="r" style="left:1513px;top:236px;width:1px;height:51px;background:#e9e9e9;"></div>
<div class="t" style="top:205px;font-size:12px;line-height:1;font-family:'Liberation Sans',sans-serif;color:#222;letter-spacing:0.087px;left:1353.54px;width:400px;text-align:center;">Projekt</div>
<div class="t" style="top:220px;font-size:12px;line-height:1;font-family:'Liberation Sans',sans-serif;color:#222;letter-spacing:0.378px;left:1353.69px;width:400px;text-align:center;">munkaidő</div>
<div class="t" style="top:244px;font-size:11px;line-height:1;font-family:'DejaVu Sans','Liberation Sans',sans-serif;color:#000;letter-spacing:0.526px;left:1353.76px;width:400px;text-align:center;">00:08:56</div>
<div class="t" style="top:270px;font-size:11px;line-height:1;font-family:'DejaVu Sans','Liberation Sans',sans-serif;color:#000;letter-spacing:0.526px;left:1353.76px;width:400px;text-align:center;">00:08:56</div>
<div class="r" style="left:1593px;top:200px;width:1px;height:35px;background:#a3bde0;"></div>
<div class="r" style="left:1593px;top:236px;width:1px;height:51px;background:#e9e9e9;"></div>
<div class="t" style="top:205px;font-size:12px;line-height:1;font-family:'Liberation Sans',sans-serif;color:#222;letter-spacing:0.145px;left:1433.57px;width:400px;text-align:center;">Interjúban</div>
<div class="t" style="top:220px;font-size:12px;line-height:1;font-family:'Liberation Sans',sans-serif;color:#222;letter-spacing:0.478px;left:1433.74px;width:400px;text-align:center;">töltött idő</div>
<div class="t" style="top:244px;font-size:11px;line-height:1;font-family:'DejaVu Sans','Liberation Sans',sans-serif;color:#000;letter-spacing:0.526px;left:1433.76px;width:400px;text-align:center;">00:00:31</div>
<div class="t" style="top:270px;font-size:11px;line-height:1;font-family:'DejaVu Sans','Liberation Sans',sans-serif;color:#000;letter-spacing:0.526px;left:1433.76px;width:400px;text-align:center;">00:00:31</div>
<div class="r" style="left:1673px;top:200px;width:1px;height:35px;background:#a3bde0;"></div>
<div class="r" style="left:1673px;top:236px;width:1px;height:51px;background:#e9e9e9;"></div>
<div class="t" style="top:205px;font-size:12px;line-height:1;font-family:'Liberation Sans',sans-serif;color:#222;letter-spacing:-0.375px;left:1513.31px;width:400px;text-align:center;">Hívásban</div>
<div class="t" style="top:220px;font-size:12px;line-height:1;font-family:'Liberation Sans',sans-serif;color:#222;letter-spacing:0.478px;left:1513.74px;width:400px;text-align:center;">töltött idő</div>
<div class="t" style="top:244px;font-size:11px;line-height:1;font-family:'DejaVu Sans','Liberation Sans',sans-serif;color:#000;letter-spacing:0.526px;left:1513.76px;width:400px;text-align:center;">00:00:25</div>
<div class="t" style="top:270px;font-size:11px;line-height:1;font-family:'DejaVu Sans','Liberation Sans',sans-serif;color:#000;letter-spacing:0.526px;left:1513.76px;width:400px;text-align:center;">00:00:25</div>
<svg style="left:554px;top:215px" width="7" height="7" viewBox="0 0 7 7"><path d="M3.5 0L7 7H0z" fill="#4b6fa6"/></svg>
<svg style="left:776px;top:210px" width="16" height="16" viewBox="0 0 16 16"><circle cx="8" cy="8" r="8" fill="#4a7db6"/><rect x="7" y="3.8" width="2.2" height="2.2" fill="#fff"/><rect x="7" y="7" width="2.2" height="4.8" fill="#fff"/></svg>
<div class="r" style="left:306px;top:236px;width:1px;height:25px;background:#e6e6e6;"></div>
<div class="r" style="left:321px;top:262px;width:1px;height:25px;background:#e6e6e6;"></div>
<svg style="left:294px;top:244px" width="9" height="9" viewBox="0 0 9 9"><defs><linearGradient id="eg9" x1="0" y1="0" x2="0" y2="1"><stop offset="0" stop-color="#fff"/><stop offset="1" stop-color="#ccd3e2"/></linearGradient></defs><rect x=".5" y=".5" width="8" height="8" rx="2" fill="url(#eg9)" stroke="#727fa2"/><path d="M2 4.500h5" stroke="#39425f"/></svg>
<div class="dot-h" style="left:304px;top:248px;width:2px"></div>
<div class="dot-v" style="left:313px;top:262px;height:12px"></div>
<div class="dot-h" style="left:314px;top:274px;width:7px"></div>
<div class="t" style="top:244px;font-size:11px;line-height:1;font-family:'DejaVu Sans','Liberation Sans',sans-serif;color:#000;font-weight:bold;letter-spacing:0.389px;left:309.11px;">Kimenő kampány</div>
<div class="t" style="top:270px;font-size:11px;line-height:1;font-family:'DejaVu Sans','Liberation Sans',sans-serif;color:#000;letter-spacing:0.265px;left:323.90px;">Teszt lista</div>
<div class="t" style="top:270px;font-size:11px;line-height:1;font-family:'DejaVu Sans','Liberation Sans',sans-serif;color:#000;letter-spacing:0.045px;left:418.42px;width:400px;text-align:center;">2020.09.01</div>
</div></div>
<div class="r" style="left:291px;top:904px;width:1410px;height:17px;background:#6189c5;border:1px solid #3560a0"></div>
<div class="r" style="left:309px;top:905px;width:1324px;height:15px;background:linear-gradient(to bottom,#dfe6f1 0%,#d3dcea 45%,#b8c6dc 50%,#c3cfe2 100%);border-left:1px solid #fff;border-right:1px solid #fff;border-top:1px solid #eef2f8;border-bottom:1px solid #e3e9f2"></div>
<svg style="left:296px;top:908px" width="5" height="9" viewBox="0 0 5 9"><path d="M5 0v9L0 4.5z" fill="#dbe5f4"/></svg>
<svg style="left:1691px;top:908px" width="5" height="9" viewBox="0 0 5 9"><path d="M0 0v9l5-4.500z" fill="#c3d3ec"/></svg>
<svg style="left:966px;top:908px" width="9" height="9" viewBox="0 0 9 9"><path d="M.5 0v9M2.500 0v9M4.500 0v9M6.500 0v9M8.500 0v9" stroke="#e4ebf5"/><path d="M1.500 0v9" stroke="#7a92b9"/><path d="M3.500 0v9" stroke="#5b7cb0"/><path d="M5.500 0v9" stroke="#466ba8"/><path d="M7.500 0v9" stroke="#355f9f"/></svg>
<div class="r" style="left:1727px;top:0px;width:1px;height:947px;background:#fff;"></div>
<div class="r" style="left:1728px;top:0px;width:1px;height:947px;background:#7fa3d6;"></div>
<div class="r" style="left:0px;top:946px;width:1729px;height:1px;background:#8fb0dc;"></div>
<div class="r" style="left:1722px;top:0px;width:6px;height:2px;background:#fff;"></div>
<div class="r" style="left:1723px;top:0px;width:4px;height:1px;background:#6f97d2;"></div>
</body>
</html>
